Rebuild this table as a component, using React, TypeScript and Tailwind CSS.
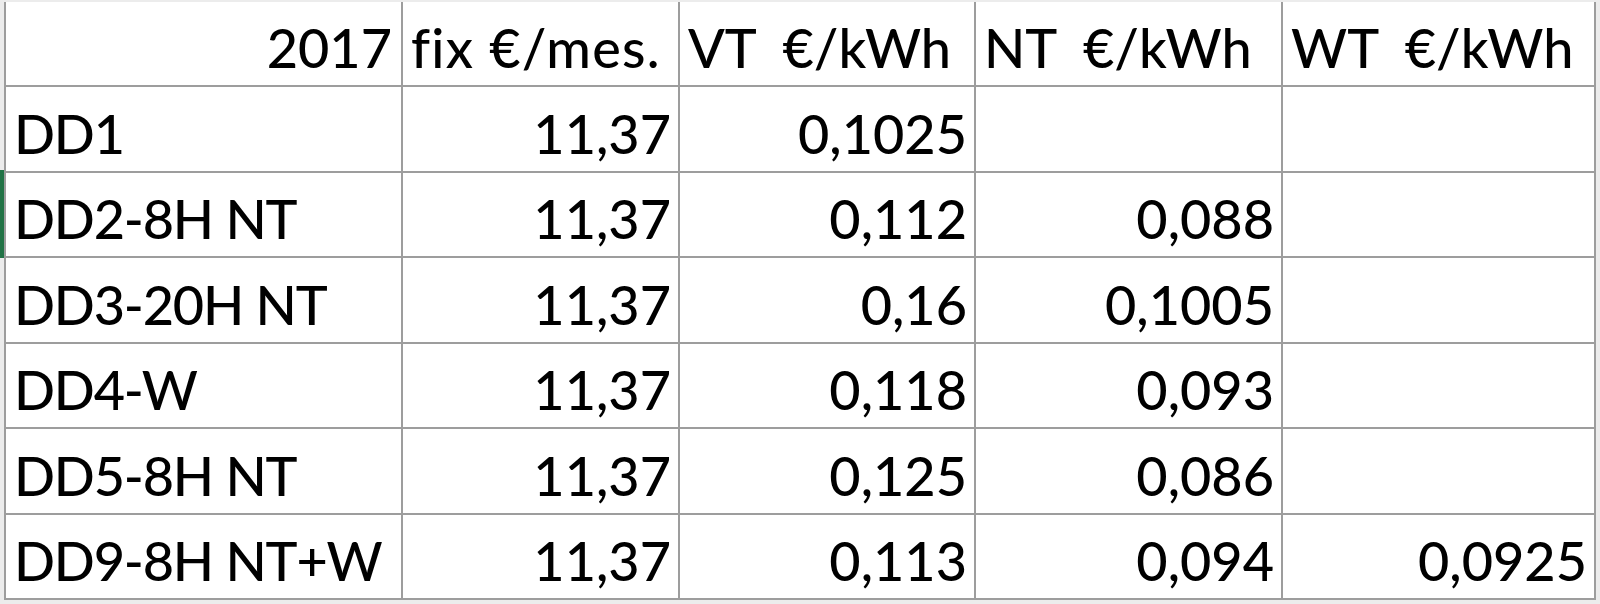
import React from "react";

const header = ["2017", "fix €/mes.", "VT  €/kWh", "NT  €/kWh", "WT  €/kWh"];
const rows: string[][] = [
  ["DD1", "11,37", "0,1025", "", ""],
  ["DD2-8H NT", "11,37", "0,112", "0,088", ""],
  ["DD3-20H NT", "11,37", "0,16", "0,1005", ""],
  ["DD4-W", "11,37", "0,118", "0,093", ""],
  ["DD5-8H NT", "11,37", "0,125", "0,086", ""],
  ["DD9-8H NT+W", "11,37", "0,113", "0,094", "0,0925"],
];

export default function App() {
  return (
    <div
      className="w-[1600px] h-[604px] bg-[#ececec] flex flex-col overflow-hidden text-black [font-variant-ligatures:none]"
      style={{ fontFamily: "Lato, 'Liberation Sans', sans-serif" }}
    >
      <div className="h-[2px] shrink-0" />
      <div className="flex flex-1">
        <div className="w-[4px] shrink-0 flex flex-col">
          <div className="h-[168px]" />
          <div className="h-[88px] bg-[#217346]" />
        </div>
        <div className="grid grid-cols-[395px_275px_294px_305px_311px] grid-rows-7 gap-[2px] bg-[#9d9d9d] pl-[2px] pr-[2px] pb-[2px] h-[598px] w-[1592px]">
          {header.map((h, i) => (
            <div
              key={"h" + i}
              className={
                "bg-white flex items-end pb-[10px] text-[54px] font-medium leading-none whitespace-pre " +
                (i === 0
                  ? "justify-end pr-[9px]"
                  : i === 1
                  ? "justify-start pl-[8px] tracking-[1.3px]"
                  : "justify-start pl-[8px]")
              }
            >
              {h}
            </div>
          ))}
          {rows.map((r, ri) =>
            r.map((c, ci) => (
              <div
                key={ri + "-" + ci}
                className={
                  "bg-white flex items-end pb-[10px] text-[54px] font-medium leading-none whitespace-pre " +
                  (ci === 0
                    ? "justify-start pl-[8px] tracking-[-1.2px]"
                    : "justify-end pr-[7px]")
                }
              >
                {c}
              </div>
            ))
          )}
        </div>
      </div>
    </div>
  );
}
